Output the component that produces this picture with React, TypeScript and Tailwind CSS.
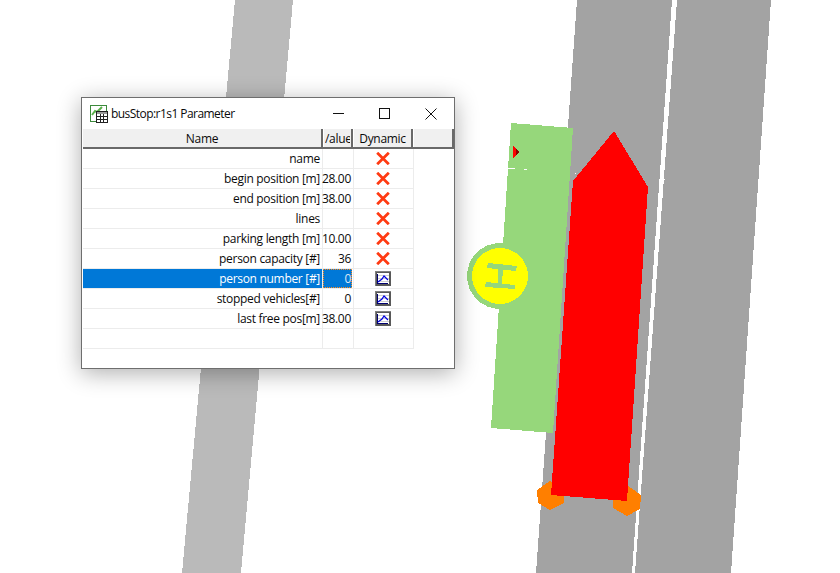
const rows = [
  { name: 'name', value: '', chart: false },
  { name: 'begin position [m]', value: '28.00', chart: false },
  { name: 'end position [m]', value: '38.00', chart: false },
  { name: 'lines', value: '', chart: false },
  { name: 'parking length [m]', value: '10.00', chart: false },
  { name: 'person capacity [#]', value: '36', chart: false },
  { name: 'person number [#]', value: '0', chart: true, selected: true },
  { name: 'stopped vehicles[#]', value: '0', chart: true },
  { name: 'last free pos[m]', value: '38.00', chart: true },
];

function Scene() {
  return (
    <svg className="absolute inset-0" width="840" height="573" viewBox="0 0 840 573" shapeRendering="crispEdges">
      <polygon points="235,0 293,0 241,573 182,573" fill="#bababa" />
      <polygon points="577,0 672,0 632,573 536,573" fill="#a3a3a3" />
      <polygon points="677,0 771,0 731,573 635,573" fill="#a3a3a3" />
      <circle cx="500" cy="276" r="33" fill="#96d77b" />
      <polygon points="511,123 573,128 553,433 491,428" fill="#96d77b" />
      <rect x="508" y="168" width="7" height="1" fill="#fff" />
      <rect x="524" y="169" width="3" height="1" fill="#fff" />
      <circle cx="500" cy="276" r="28" fill="#ffff00" />
      <polygon points="488,263 517,266 516,271 487,268" fill="#96d77b" />
      <polygon points="486,282 515,285 515,289 485,287" fill="#96d77b" />
      <polygon points="498,268 503,268 502,285 498,285" fill="#96d77b" />
      <polygon points="513,146 519,152 513,159" fill="#ff0000" />
      <polygon points="516,149 519,152 516,156" fill="#8b0000" />
      <polygon points="537,490 550,481 564,489 564,503 550,510 538,503" fill="#ff7f00" />
      <polygon points="613,495 627,485 641,495 640,509 627,516 613,508" fill="#ff7f00" />
      <polygon points="614,131 648,187 627,501 551,495 573,181" fill="#ff0000" />
      <rect x="575" y="173" width="1" height="1" fill="#fff" />
      <rect x="663" y="179" width="2" height="1" fill="#fff" />
    </svg>
  );
}

function TableIcon() {
  return (
    <svg width="18" height="18" viewBox="0 0 18 18" shapeRendering="crispEdges">
      <rect x="0.5" y="0.5" width="16" height="16" fill="#fff" stroke="#3c8a3c" />
      <path d="M2 10 L5 6 L7 7 L12 2" fill="none" stroke="#5ab04a" strokeWidth="2" shapeRendering="auto" />
      <rect x="6" y="6" width="12" height="12" fill="#fff" />
      <rect x="6.5" y="6.5" width="11" height="11" fill="none" stroke="#222" />
      <rect x="7" y="7" width="10" height="2" fill="#9a9a9a" />
      <path d="M7 11.5H17M7 14.5H17M10.5 9V17M13.5 9V17" stroke="#222" />
    </svg>
  );
}

function CrossIcon() {
  return (
    <svg width="14" height="13" viewBox="0 0 14 13">
      <path d="M1.2 0.8 L12.8 12.2 M12.8 0.8 L1.2 12.2" stroke="#ff3a12" strokeWidth="2.8" />
    </svg>
  );
}

function ChartIcon() {
  return (
    <svg width="16" height="15" viewBox="0 0 16 15" shapeRendering="crispEdges">
      <rect width="16" height="15" fill="#585858" />
      <rect x="0" y="0" width="16" height="1" fill="#808080" />
      <rect x="0" y="0" width="1" height="15" fill="#808080" />
      <rect x="2" y="2" width="12" height="11" fill="#ffffff" />
      <path d="M3 4.5H14M3 7.5H14M3 10.5H14" stroke="#d0d0d0" />
      <path d="M2.5 3V13M2 12.5H13" stroke="#00006e" />
      <path d="M3 11 L7 8 L9 5 L13 9" fill="none" stroke="#0000e0" strokeWidth="1.2" shapeRendering="auto" />
    </svg>
  );
}

function HeaderCell({ className, children }: { className: string; children?: React.ReactNode }) {
  return (
    <div className={`flex items-center justify-center overflow-hidden whitespace-nowrap pt-[1px] border-r-2 border-r-[#696969] ${className}`}>
      {children}
    </div>
  );
}

export default function App() {
  return (
    <div
      className="relative w-[840px] h-[573px] overflow-hidden bg-white text-[12px] text-[#0a0a0a] tracking-[-0.3px]"
      style={{ fontFamily: '"Open Sans", "Noto Sans", sans-serif' }}
    >
      <Scene />
      <div className="absolute left-[81px] top-[97px] w-[374px] h-[272px] flex flex-col bg-white border border-[#6e6e6e] shadow-[0_4px_22px_rgba(0,0,0,0.32)]">
        <div className="flex items-center h-[31px] shrink-0 pl-[8px]">
          <TableIcon />
          <span className="ml-[3px] tracking-[-0.55px]">busStop:r1s1 Parameter</span>
          <div className="ml-auto flex items-center h-full">
            <svg className="mr-[35px]" width="11" height="1" shapeRendering="crispEdges"><rect width="11" height="1" fill="#111" /></svg>
            <svg className="mr-[35px]" width="11" height="11" shapeRendering="crispEdges"><rect x="0.5" y="0.5" width="10" height="10" fill="none" stroke="#111" /></svg>
            <svg className="mr-[17px]" width="12" height="12"><path d="M0.5 0.5L11.5 11.5M11.5 0.5L0.5 11.5" stroke="#111" /></svg>
          </div>
        </div>
        <div className="flex h-[20px] shrink-0 ml-[1px] bg-[#f0f0f0] border-b-2 border-b-[#696969]">
          <HeaderCell className="w-[240px]">Name</HeaderCell>
          <HeaderCell className="w-[30px] border-l border-l-white">
            <span className="w-[25px] overflow-hidden">/alue</span>
          </HeaderCell>
          <HeaderCell className="w-[60px] border-l border-l-white">Dynamic</HeaderCell>
          <HeaderCell className="w-[41px] border-l border-l-white" />
        </div>
        <div className="flex flex-col w-[331px] ml-[1px]">
          {rows.map((r) => (
            <div key={r.name} className="flex h-[20px] border-b border-b-[#ececec]">
              <div className={`flex items-center justify-end w-[240px] pr-[2px] border-r border-r-[#ececec] ${r.selected ? 'bg-[#0078d7] text-white' : ''}`}>
                {r.name}
              </div>
              {r.selected ? (
                <div className="flex items-center justify-end w-[31px] pr-[1px] border-r border-r-[#ececec] bg-white">
                  <span className="flex items-center justify-end w-[29px] h-[19px] bg-[#0078d7] text-[#dce9f5] border border-dotted border-[#ff8a1e]">{r.value}</span>
                </div>
              ) : (
                <div className="flex items-center justify-end w-[31px] pr-[2px] border-r border-r-[#ececec]">{r.value}</div>
              )}
              <div className="flex items-center justify-center w-[60px] pr-[1px] border-r border-r-[#ececec]">
                {r.chart ? <ChartIcon /> : <CrossIcon />}
              </div>
            </div>
          ))}
          <div className="flex h-[20px] border-b border-b-[#ececec]">
            <div className="w-[240px] border-r border-r-[#ececec]" />
            <div className="w-[31px] border-r border-r-[#ececec]" />
            <div className="w-[60px] border-r border-r-[#ececec]" />
          </div>
        </div>
      </div>
    </div>
  );
}
